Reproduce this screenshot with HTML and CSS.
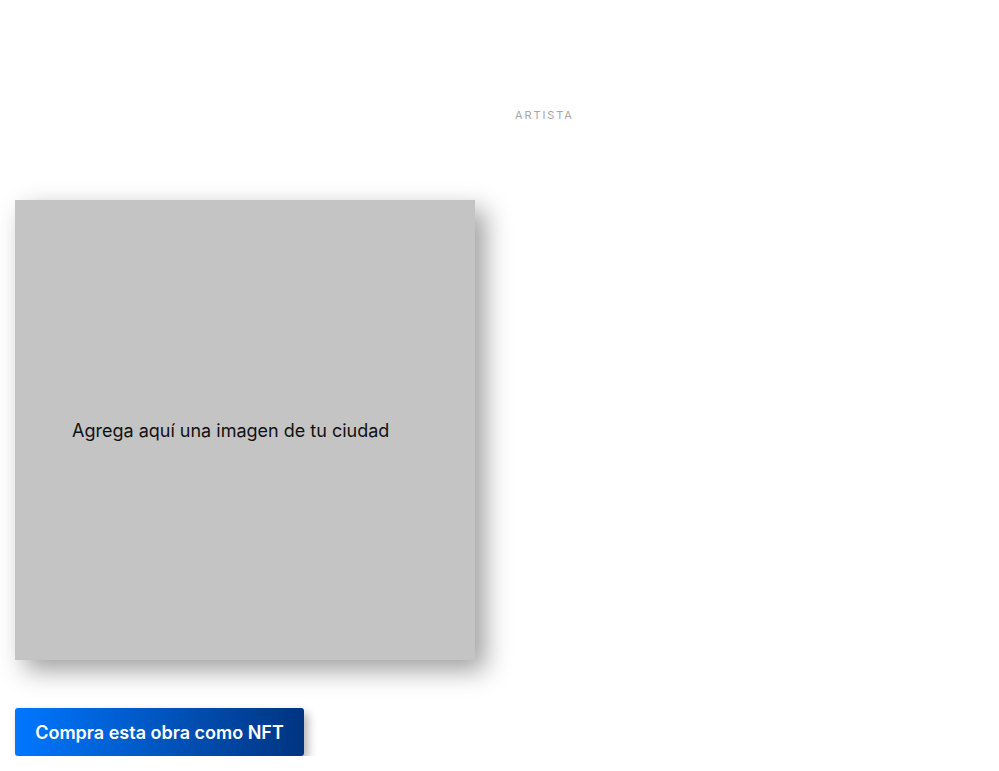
FILE: index.html
```html
<!DOCTYPE html>
<html lang="es">
<head>
<meta charset="utf-8">
<link rel="stylesheet" href="styles.css">
</head>
<body>
<div class="page">
  <header class="header">
    <span class="label">ARTISTA</span>
  </header>
  <div class="image-box">
    <p class="placeholder">Agrega aquí una imagen de tu ciudad</p>
  </div>
  <button class="buy">Compra esta obra como NFT</button>
</div>
</body>
</html>
```
FILE: styles.css
```css
html, body {
  margin: 0;
  padding: 0;
  background: #ffffff;
}
.page {
  font-family: Inter, "Noto Sans", sans-serif;
  padding: 0 15px;
  display: flex;
  flex-direction: column;
  align-items: flex-start;
}
.header {
  height: 200px;
  width: 100%;
  display: flex;
  justify-content: flex-start;
  padding-top: 108px;
  box-sizing: border-box;
}
.label {
  margin-left: 500px;
  font-size: 11px;
  line-height: 14px;
  letter-spacing: 1.9px;
  color: #a6a6a6;
}
.image-box {
  width: 460px;
  height: 460px;
  background: #c4c4c4;
  box-shadow: 10px 10px 24px rgba(0, 0, 0, 0.38);
  display: flex;
  align-items: center;
  box-sizing: border-box;
  padding-left: 57px;
  padding-top: 2px;
}
.placeholder {
  margin: 0;
  font-size: 18px;
  line-height: 22px;
  color: #111111;
}
.buy {
  margin-top: 48px;
  width: 289px;
  height: 48px;
  border: none;
  border-radius: 3px;
  background: linear-gradient(90deg, #0077ff 0%, #003480 100%);
  color: #ffffff;
  font-family: Inter, "Noto Sans", sans-serif;
  font-size: 18px;
  font-weight: 600;
  box-shadow: 4px 5px 10px rgba(0, 0, 0, 0.3);
  padding: 0;
}
```
